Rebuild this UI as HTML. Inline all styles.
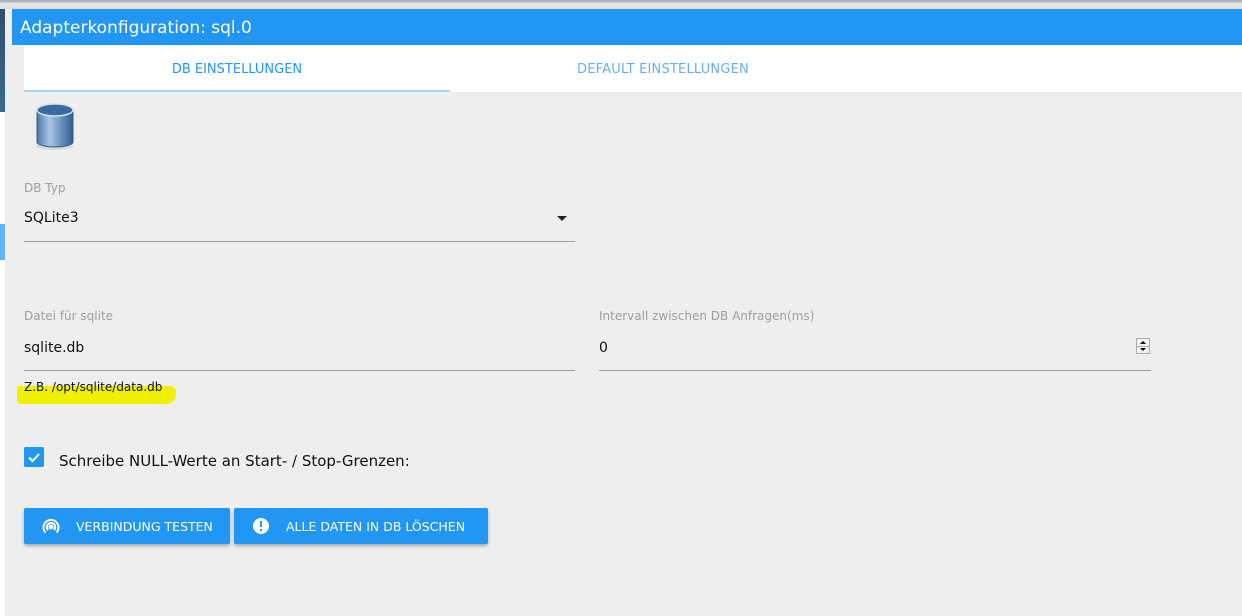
<!DOCTYPE html>
<html><head><meta charset="utf-8"><style>
*{margin:0;padding:0;box-sizing:border-box}
body{width:1242px;height:616px;overflow:hidden;background:#fff;font-family:"DejaVu Sans","Liberation Sans",sans-serif;position:relative}
.abs{position:absolute}
.lbl{font-size:12px;color:#9e9e9e}
.val{font-size:14px;color:#111}
.line{height:1px;background:#9e9e9e}
.btn{background:#2196f3;color:#fff;font-size:12.5px;border-radius:2px;box-shadow:0 2px 3px rgba(0,0,0,.3);display:flex;align-items:center}
</style></head><body>
<div class="abs" style="left:0;top:0;width:1242px;height:9px;background:linear-gradient(#a8b4c0 0,#a8b4c0 2px,#e6e6e6 3px,#dcdcdc 9px)"></div>
<div class="abs" style="left:0;top:9px;width:5px;height:103px;background:linear-gradient(#2d4f70,#3a6a90)"></div>
<div class="abs" style="left:0;top:224px;width:5px;height:36px;background:#64b5f6"></div>
<div class="abs" style="left:5px;top:9px;width:1237px;height:607px;background:#eeeeee"></div>
<div class="abs" style="left:12px;top:9px;width:1230px;height:36px;background:#2196f3;color:#fff;font-size:17px;line-height:38px;padding-left:8px">Adapterkonfiguration: sql.0</div>
<div class="abs" style="left:24px;top:45px;width:1218px;height:47px;background:#fff"></div>
<div class="abs" style="left:24px;top:90px;width:426px;height:2px;background:#a6d4f2"></div>
<div class="abs" style="left:24px;top:45px;width:426px;height:46px;line-height:50px;text-align:center;font-size:13px;color:#2196f3">DB EINSTELLUNGEN</div>
<div class="abs" style="left:450px;top:45px;width:426px;height:46px;line-height:50px;text-align:center;font-size:13px;color:#64aef0;letter-spacing:.2px">DEFAULT EINSTELLUNGEN</div>
<svg class="abs" style="left:34px;top:101px" width="44" height="50" viewBox="0 0 44 50">
<defs><linearGradient id="g" x1="0" x2="1"><stop offset="0" stop-color="#4a78ab"/><stop offset=".35" stop-color="#a9c6e3"/><stop offset="1" stop-color="#2f5d92"/></linearGradient></defs>
<ellipse cx="21" cy="45" rx="19" ry="4" fill="#ccc" opacity=".6"/>
<path d="M3 9 V41 A18 5 0 0 0 39 41 V9 Z" fill="url(#g)" stroke="#2f5a88"/>
<ellipse cx="21" cy="9" rx="18" ry="6" fill="#3b6aa0" stroke="#cfe0f0" stroke-width="1.5"/>
</svg>
<div class="abs lbl" style="left:24px;top:181px">DB Typ</div>
<div class="abs val" style="left:24px;top:210px">SQLite3</div>
<div class="abs" style="left:557px;top:216px;width:0;height:0;border-left:5px solid transparent;border-right:5px solid transparent;border-top:5px solid #222"></div>
<div class="abs line" style="left:24px;top:241px;width:551px"></div>
<div class="abs lbl" style="left:24px;top:309px">Datei für sqlite</div>
<div class="abs val" style="left:24px;top:340px">sqlite.db</div>
<div class="abs line" style="left:24px;top:370px;width:551px"></div>
<div class="abs lbl" style="left:599px;top:309px">Intervall zwischen DB Anfragen(ms)</div>
<div class="abs val" style="left:599px;top:340px">0</div>
<div class="abs" style="left:1136px;top:338px;width:14px;height:16px;border:1px solid #aaa;background:#f0f0f0"><div style="position:absolute;left:3px;top:2px;border-left:3px solid transparent;border-right:3px solid transparent;border-bottom:3px solid #000"></div><div style="position:absolute;left:0;top:7px;width:12px;height:1px;background:#aaa"></div><div style="position:absolute;left:3px;top:9px;border-left:3px solid transparent;border-right:3px solid transparent;border-top:3px solid #000"></div></div>
<div class="abs line" style="left:599px;top:370px;width:552px"></div>
<div class="abs" style="left:17px;top:386px;width:159px;height:18px;background:#eef000;border-radius:2px 6px 10px 3px"></div>
<div class="abs" style="left:24px;top:380px;font-size:12px;color:#111">Z.B. /opt/sqlite/data.db</div>
<div class="abs" style="left:24px;top:447px;width:20px;height:20px;background:#2196f3;border-radius:2px"><svg width="20" height="20"><path d="M5 10.5 L8.5 14 L15 7" stroke="#fff" stroke-width="2" fill="none"/></svg></div>
<div class="abs" style="left:59px;top:452px;font-size:15px;color:#111">Schreibe NULL-Werte an Start- / Stop-Grenzen:</div>
<div class="abs btn" style="left:24px;top:508px;width:206px;height:36px"><svg style="margin-left:17px" width="20" height="20" viewBox="0 0 20 20" fill="none" stroke="#fff" stroke-width="2"><circle cx="10" cy="11" r="1.5" fill="#fff"/><path d="M7 14 A4.2 4.2 0 1 1 13 14"/><path d="M4.5 16.5 A7.5 7.5 0 1 1 15.5 16.5"/></svg><span style="margin-left:15px">VERBINDUNG TESTEN</span></div>
<div class="abs btn" style="left:234px;top:508px;width:254px;height:36px"><svg style="margin-left:18px" width="18" height="18" viewBox="0 0 18 18"><circle cx="9" cy="9" r="8" fill="#fff"/><rect x="8" y="4" width="2" height="6" fill="#2196f3"/><rect x="8" y="12" width="2" height="2" fill="#2196f3"/></svg><span style="margin-left:16px">ALLE DATEN IN DB LÖSCHEN</span></div>
</body></html>
